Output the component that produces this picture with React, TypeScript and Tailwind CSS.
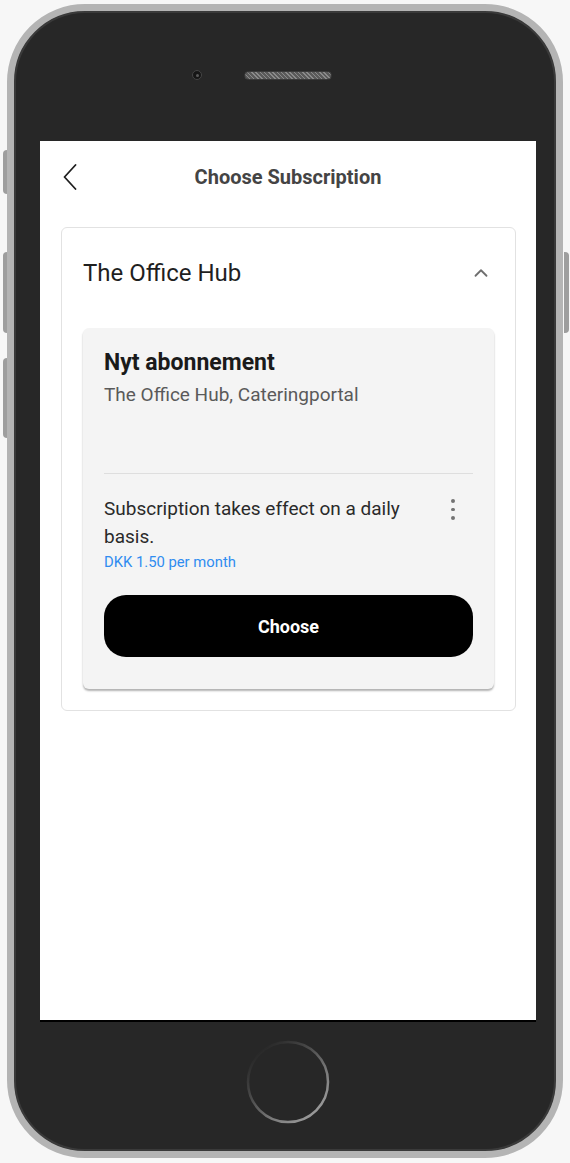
import { ChevronUp } from "lucide-react";

function HomeButton() {
  return (
    <svg width="90" height="90" viewBox="0 0 90 90">
      <defs>
        <linearGradient id="ring" x1="0.15" y1="0.1" x2="0.85" y2="0.9">
          <stop offset="0%" stopColor="#272727" />
          <stop offset="35%" stopColor="#4a4a4a" />
          <stop offset="70%" stopColor="#7a7a7a" />
          <stop offset="100%" stopColor="#9a9a9a" />
        </linearGradient>
      </defs>
      <circle cx="45" cy="45" r="40" fill="none" stroke="url(#ring)" strokeWidth="2.5" />
    </svg>
  );
}

function BackChevron() {
  return (
    <svg width="14" height="26" viewBox="0 0 14 26" className="text-[#1f1f1f]">
      <polyline points="12.5,1 1.5,13 12.5,25" fill="none" stroke="currentColor" strokeWidth="1.8" strokeLinecap="round" strokeLinejoin="round" />
    </svg>
  );
}

function Kebab() {
  return (
    <div className="flex flex-col items-center gap-[5px] w-[4px] pt-[3px]">
      <span className="w-[3.5px] h-[3.5px] rounded-full bg-[#737373]" />
      <span className="w-[3.5px] h-[3.5px] rounded-full bg-[#737373]" />
      <span className="w-[3.5px] h-[3.5px] rounded-full bg-[#737373]" />
    </div>
  );
}

export default function App() {
  return (
    <div className="w-[570px] h-[1163px] bg-[#f7f7f7] pt-[4px] px-[7px] relative" style={{ fontFamily: "Roboto, 'Noto Sans', sans-serif" }}>
      {/* side buttons */}
      <div className="absolute left-[3px] top-[150px] w-[5px] h-[44px] rounded-l-sm bg-[#9e9e9e]" />
      <div className="absolute left-[3px] top-[252px] w-[5px] h-[81px] rounded-l-sm bg-[#9e9e9e]" />
      <div className="absolute left-[3px] top-[358px] w-[5px] h-[80px] rounded-l-sm bg-[#9e9e9e]" />
      <div className="absolute right-[1px] top-[252px] w-[5px] h-[81px] rounded-r-sm bg-[#9e9e9e]" />

      {/* phone body */}
      <div className="relative h-[1154px] rounded-[78px] border-[7px] border-[#b4b4b4] bg-[#272727] flex flex-col items-center pl-[6px] shadow-[inset_0_0_0_2px_#3a3a3a]">
        {/* top: camera + speaker */}
        <div className="h-[130px] w-full flex items-center justify-center gap-[42px] pr-[52px] pb-[2px]">
          <div className="w-[10px] h-[10px] rounded-full bg-[#161616] border border-[#454545] flex items-center justify-center">
            <div className="w-[3px] h-[3px] rounded-full bg-[#5a5a5a]" />
          </div>
          <div className="w-[88px] h-[9px] rounded-full border border-[#3a3a3a] bg-[repeating-linear-gradient(45deg,#8a8a8a_0_1px,#5a5a5a_1px_3px)]" />
        </div>

        {/* screen */}
        <div className="w-[496px] h-[881px] bg-white border-b-2 border-black flex flex-col">
          {/* header */}
          <div className="h-[72px] flex items-center relative pl-[23px]">
            <BackChevron />
            <h1 className="absolute inset-x-0 text-center text-[20px] font-bold text-[#444] pointer-events-none -mt-[1px]">Choose Subscription</h1>
          </div>

          {/* outer card */}
          <div className="ml-[21px] mr-[20px] mt-[14px] rounded-[6px] border border-[#e2e2e2] px-[21px] pb-[21px]">
            <div className="h-[89px] flex items-center justify-between pt-[1px]">
              <span className="text-[24px] text-[#1f1f1f]">The Office Hub</span>
              <ChevronUp className="w-[22px] h-[22px] text-[#6f6f6f] mr-[2px]" strokeWidth={2} />
            </div>

            {/* inner card */}
            <div className="bg-[#f4f4f4] rounded-[6px] shadow-[0_2px_2px_rgba(0,0,0,0.3)] px-[21px] pt-[20px] pb-[32px] mt-[11px]">
              <div className="text-[23px] font-bold text-[#1a1a1a] leading-[30px]">Nyt abonnement</div>
              <div className="text-[19px] text-[#5a5a5a] leading-[26px] mt-[4px]">The Office Hub, Cateringportal</div>
              <div className="h-px bg-[#dedede] mt-[65px]" />
              <div className="flex items-start justify-between mt-[21px]">
                <div>
                  <p className="text-[19px] text-[#2a2a2a] leading-[28px] w-[320px]">Subscription takes effect on a daily basis.</p>
                  <p className="text-[14.8px] text-[#2f8cf0] leading-[20px] mt-px">DKK 1.50 per month</p>
                </div>
                <div className="mr-[18px] mt-[1px]">
                  <Kebab />
                </div>
              </div>
              <button className="mt-[23px] w-full h-[62px] rounded-[22px] bg-black text-white text-[18px] font-bold">Choose</button>
            </div>
          </div>
        </div>

        {/* home button */}
        <div className="flex-1 flex items-center justify-center w-full pb-[10px]">
          <HomeButton />
        </div>
      </div>
    </div>
  );
}
